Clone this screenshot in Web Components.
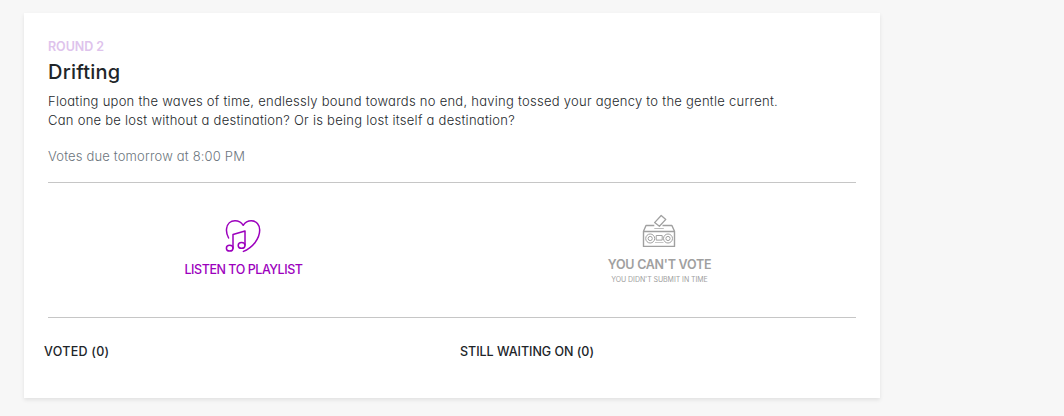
<!DOCTYPE html>
<html lang="en">
<head>
<meta charset="utf-8">
<title>Round 2 – Drifting</title>
<style>
body{margin:0;min-height:416px;display:flow-root;background:#f7f7f7;color:#212529;font-family:Inter,"Open Sans",sans-serif;font-size:13px}
</style>
</head>
<body>
<round-card>
  <round-header>
    <fit-text slot="label" width="56">ROUND 2</fit-text>
    <fit-text slot="title" width="72.5">Drifting</fit-text>
    <fit-text slot="text" width="730">Floating upon the waves of time, endlessly bound towards no end, having tossed your agency to the gentle current.</fit-text>
    <fit-text slot="text" width="467">Can one be lost without a destination? Or is being lost itself a destination?</fit-text>
    <fit-text slot="due" width="197">Votes due tomorrow at 8:00 PM</fit-text>
  </round-header>
  <round-actions>
    <round-action kind="listen"><playlist-icon slot="icon"></playlist-icon><fit-text width="118">LISTEN TO PLAYLIST</fit-text></round-action>
    <round-action kind="vote"><ballot-icon slot="icon"></ballot-icon><fit-text width="103.5">YOU CAN'T VOTE</fit-text><fit-text slot="note" width="96.5">YOU DIDN'T SUBMIT IN TIME</fit-text></round-action>
  </round-actions>
  <vote-status>
    <fit-text width="65.5">VOTED (0)</fit-text>
    <fit-text width="134">STILL WAITING ON (0)</fit-text>
  </vote-status>
</round-card>
<script>
const define = (name, html) => customElements.define(name, class extends HTMLElement {
  constructor() {
    super();
    this.attachShadow({ mode: 'open' }).innerHTML = html;
  }
});

define('round-card', `<style>
:host{display:block;box-sizing:border-box;width:856px;height:385px;margin:13px 0 0 24px;padding:24px;background:#fff;box-shadow:0 2px 4px rgba(0,0,0,.09)}
</style><slot></slot>`);

define('round-header', `<style>
:host{display:flex;flex-direction:column;box-sizing:border-box;height:146px;border-bottom:1px solid #c6c6c6}
.label{height:19px;line-height:19px;font-size:12.5px;font-weight:600;color:#dec3ec}
.title{height:33px;line-height:32px;font-size:20px;font-weight:450;color:#212529}
.text{margin-top:3px;line-height:19px;font-weight:300;color:#25292d}
.due{margin-top:17px;line-height:19px;font-weight:300;color:#6c757d}
</style>
<div class="label"><slot name="label"></slot></div>
<div class="title"><slot name="title"></slot></div>
<div class="text"><slot name="text"></slot></div>
<div class="due"><slot name="due"></slot></div>`);

define('round-actions', `<style>
:host{display:grid;grid-template-columns:391px 1fr;column-gap:24px;box-sizing:border-box;height:135px;border-bottom:1px solid #c6c6c6}
</style><slot></slot>`);

define('round-action', `<style>
:host{display:flex;flex-direction:column;align-items:center;box-sizing:border-box;padding-top:36px;color:#9c00bd}
:host([kind=vote]){padding:31px 0 0;color:#a0a0a0;font-weight:600}
:host([kind=listen]){font-weight:450}
.name{margin-top:6px;line-height:20px;font-size:12.5px}
.note{line-height:9px;font-size:7px;font-weight:400}
</style><slot name="icon"></slot><div class="name"><slot></slot></div><div class="note"><slot name="note"></slot></div>`);

define('vote-status', `<style>
:host{display:grid;grid-template-columns:416px 1fr;margin:24px 0 0 -4px;line-height:20px;font-size:12.5px;font-weight:450;color:#212529}
</style><slot></slot>`);

/* One line of text whose tracking is adjusted to the requested width. */
define('fit-text', `<style>
:host{display:block;white-space:nowrap;font-feature-settings:"cv11"}
span{display:inline-block;vertical-align:top}
</style><span><slot></slot></span>`);

define('playlist-icon', `<style>:host{display:block;width:36px;height:35px;margin-right:2px}svg{display:block}</style>
<svg width="36" height="35" viewBox="0 0 36 35" fill="none" stroke="#9c00bd" stroke-width="1.5" stroke-linecap="round" stroke-linejoin="round">
<path d="M3.6 19C1.8 15.8 1.2 12.6 1.6 9.7 2.2 4.7 5.7 1.8 10 1.8c3.4 0 6.4 1.7 8.2 4.5 1.9-2.9 4.8-4.5 8.1-4.5 5.2 0 8.4 4 8.4 9.3 0 8.9-7.3 17.5-16.3 21.3"/>
<path d="M8 29.2V15.5l12-3.5v13.9"/><ellipse cx="4.7" cy="29.2" rx="3.3" ry="2.9"/><ellipse cx="16.6" cy="26.4" rx="3.4" ry="2.9"/></svg>`);

define('ballot-icon', `<style>:host{display:block;width:34px;height:35px;margin-right:1px}svg{display:block}</style>
<svg width="34" height="35" viewBox="0 0 34 35" fill="none" stroke="#a0a0a0" stroke-linejoin="round">
<path stroke-width="1.3" d="M12.6 8.6 19.2 1.5 23.8 5.4 17.4 12.3z"/>
<path stroke-width="1.4" d="M12.3 11.5H4L1.5 17.3V32.4H32.5V17.3L29.9 11.5H20.5M1.5 17.5H32.5"/>
<path stroke-opacity=".7" d="M12.3 14.5h9.5"/>
<g stroke-width="1"><circle cx="8.2" cy="24.5" r="4.5"/><circle cx="8.2" cy="24.5" r="2.1"/><circle cx="26" cy="24.5" r="4.5"/><circle cx="26" cy="24.5" r="2.1"/><path d="M14.2 21.5h6v4.6h-6z"/><path stroke-opacity=".6" d="M13 28.5h8.5"/></g></svg>`);

for (const el of document.querySelectorAll('fit-text')) {
  const span = el.shadowRoot.querySelector('span');
  const count = el.textContent.length;
  const spacing = (Number(el.getAttribute('width')) - span.getBoundingClientRect().width) / count;
  span.style.letterSpacing = spacing.toFixed(4) + 'px';
}
</script>
</body>
</html>
